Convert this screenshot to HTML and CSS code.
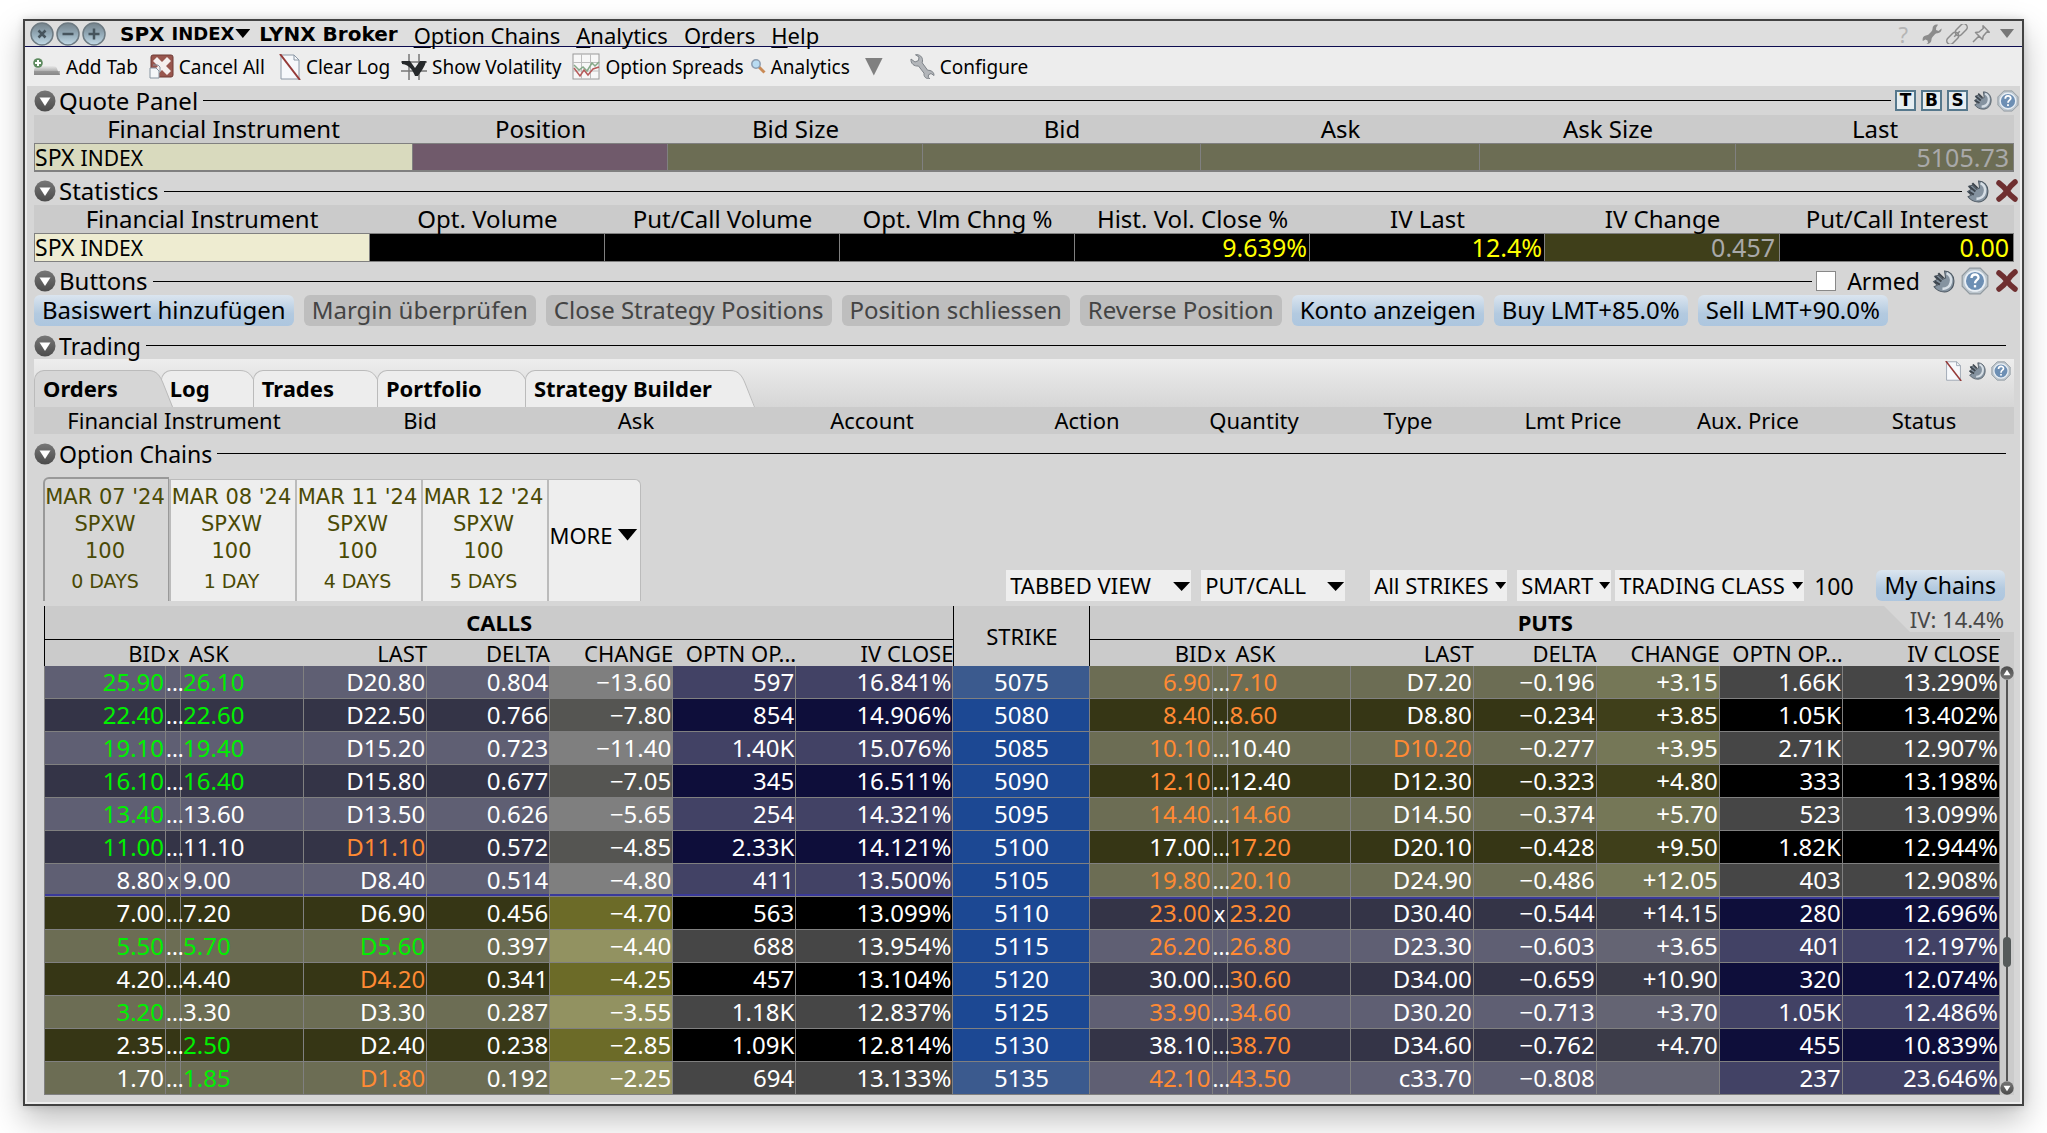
FILE: index.html
```html
<!DOCTYPE html>
<html lang="en">
<head>
<meta charset="utf-8">
<title>SPX INDEX – LYNX Broker</title>
<link rel="stylesheet" href="styles.css">
</head>
<body>
<svg class="sprite" aria-hidden="true">
  <defs>
    <linearGradient id="g-orb" x1="0" y1="0" x2="0" y2="1"><stop offset="0" stop-color="#75838c"/><stop offset=".5" stop-color="#93a9b6"/><stop offset="1" stop-color="#c3dbe8"/></linearGradient>
    <linearGradient id="g-disc" x1="0" y1="0" x2="0" y2="1"><stop offset="0" stop-color="#777"/><stop offset="1" stop-color="#4c4c4c"/></linearGradient>
    <linearGradient id="g-bar" x1="0" y1="0" x2="0" y2="1"><stop offset="0" stop-color="#e8e8e8"/><stop offset="1" stop-color="#858585"/></linearGradient>
    <symbol id="i-fold" viewBox="0 0 22 22"><circle cx="11" cy="11" r="10.5" fill="url(#g-disc)"/><path d="M5.500 7.500h11L11 16z" fill="#fff"/></symbol>
    <symbol id="i-close" viewBox="0 0 24 24"><circle cx="12" cy="12" r="11" fill="url(#g-orb)" stroke="#6d7a82" stroke-width="1.500"/><path d="M8.500 8.500l7 7M15.500 8.500l-7 7" stroke="#46545d" stroke-width="2.500"/></symbol>
    <symbol id="i-min" viewBox="0 0 24 24"><circle cx="12" cy="12" r="11" fill="url(#g-orb)" stroke="#6d7a82" stroke-width="1.500"/><path d="M6.500 12h11" stroke="#46545d" stroke-width="2.500"/></symbol>
    <symbol id="i-max" viewBox="0 0 24 24"><circle cx="12" cy="12" r="11" fill="url(#g-orb)" stroke="#6d7a82" stroke-width="1.500"/><path d="M6.500 12h11M12 6.500v11" stroke="#46545d" stroke-width="2.500"/></symbol>
    <symbol id="i-wrench-flat" viewBox="0 0 20 20"><path d="M19.500 4.500l-3 2.500-2.500-1 .2-2.500L16 .8C13 0 10.500 2 10.500 5c0 1-.5 2-1.500 3L7 10c-1 1-2 1.300-3.200 1.500C1.500 12 0 14 .8 17l2.700-1.500 2 1L6 19l-1.500 1c3 .3 5-1.800 5-4.500 0-1 .3-1.800 1-2.500l2.500-2.700c.8-.8 1.600-1 2.600-1.100 2.500-.2 4.300-2 3.900-4.700z" fill="#8c8c8c"/></symbol>
    <symbol id="i-link" viewBox="0 0 22 20"><g fill="none" stroke="#8c8c8c" stroke-width="1.500" transform="rotate(-45 11 10)"><rect x="-2" y="6.500" width="14" height="7" rx="3.500"/><rect x="10" y="6.500" width="14" height="7" rx="3.500"/><path d="M7 10h8"/></g></symbol>
    <symbol id="i-pin" viewBox="0 0 18 18"><path d="M1 17l6-6M3.500 7.500l7 7 .8-3.500 3.500-4 2.500.2L11 .8l.2 2.700L7 7z" fill="none" stroke="#8c8c8c" stroke-width="1.500" stroke-linejoin="round"/></symbol>
    <symbol id="i-addtab" viewBox="0 0 28 18"><path d="M1 17v-4c0-4 3-5 6-5h13c4 0 4 3 5 5l2 4z" fill="url(#g-bar)"/><path d="M1 13h26v4H1z" fill="#8b8b8b" opacity=".6"/><circle cx="5" cy="5" r="4.800" fill="#5d8a5f"/><path d="M5 2v6M2 5h6" stroke="#fff" stroke-width="2"/></symbol>
    <symbol id="i-cancel" viewBox="0 0 25 25"><rect x="2" y="1" width="22" height="22" rx="2" fill="#98564e" stroke="#6e3a35"/><path d="M8 3l5 5 5-5 4 4-5 5 5 5-4 4-5-5-5 5-4-4 5-5-5-5z" fill="#f5efee"/><path d="M1 14h6l3 3v7H1z" fill="#f4f6f8" stroke="#8794a0"/><path d="M4 11h5l2 2v5" fill="none" stroke="#8794a0"/></symbol>
    <symbol id="i-clear" viewBox="0 0 22 26"><path d="M2 1h13l5 5v19H2z" fill="#f6f8fb" stroke="#8c98a6"/><path d="M15 1v5h5" fill="none" stroke="#8c98a6"/><path d="M1 0l20 26" stroke="#953a38" stroke-width="2"/></symbol>
    <symbol id="i-vol" viewBox="0 0 26 26"><path d="M8 0v26M18 0v26M0 8h26M0 17h26" stroke="#777" stroke-width="1.500"/><path d="M1 7h8l5 7 5-7h6c-1 6-5 10-8 15h-3C12 17 9 11 1 10z" fill="#26292b"/></symbol>
    <symbol id="i-spread" viewBox="0 0 28 27"><rect x="1" y="1" width="26" height="25" fill="#f7f7f7" stroke="#9a9a9a"/><path d="M9.500 1v25M18.500 1v25M1 9.500h26M1 18h26" stroke="#bdbdbd"/><path d="M2 12l5 5 4-3 4 4 5-8 3 3 4-4" fill="none" stroke="#86a989" stroke-width="1.500"/><path d="M2 15l6 8 4-6 4 5 5-6 6-2" fill="none" stroke="#b65a5a" stroke-width="1.500"/></symbol>
    <symbol id="i-loupe" viewBox="0 0 15 15"><path d="M8 8l5.500 5.500" stroke="#c98a55" stroke-width="3"/><circle cx="5" cy="5" r="4.200" fill="#b9dcf2" stroke="#8c9db0" stroke-width="1.500"/></symbol>
    <symbol id="i-wrench" viewBox="0 0 25 25"><path d="M1 5l4 3 3.500-1.500L9 3 5.500.8C9.500 0 13 3 12.500 7l-.3 1.800 5.500 7.500c3-.2 6.500 1.500 6.300 5.200L21 19.500l-2.500 1.300-.3 2.700 1.800 1.200c-4 .5-6.500-2-6-5.500L8.500 12C4 12.500.5 9.500 1 5z" fill="#b3b6ba" stroke="#7e8389"/></symbol>
    <symbol id="i-tool" viewBox="0 0 22 22"><path d="M12 1c5 0 9 4 9 9.500C21 17 17 21 12 21c-4 0-7.500-1.500-10-5l3-1.500L1.500 11 5 9 2.500 6 6 5l4 4 3-1.500z" fill="#8593a0" stroke="#4e5963"/><path d="M3 6l6 5M6 3l5 5M2.500 11l5 3" stroke="#3d454d" stroke-width="2"/><path d="M14 3c4 2 5 5 4 9s-4 6-8 6" fill="none" stroke="#d6dee5" stroke-width="2.500"/></symbol>
    <symbol id="i-help" viewBox="0 0 24 24"><path d="M7.500 1h9L23 7.500v9L16.500 23h-9L1 16.500v-9z" fill="#bcc6ce" stroke="#8f989f"/><circle cx="12" cy="12" r="8.500" fill="#6d8fb4" stroke="#e9eff5" stroke-width="1.500"/><path d="M9 9.500c0-4 6-4 6-.5 0 2.200-3 2-3 5" fill="none" stroke="#fff" stroke-width="2"/><rect x="11" y="15.500" width="2" height="2" fill="#fff"/></symbol>
    <symbol id="i-x" viewBox="0 0 24 24"><path d="M4 4c4 3 6 5 8 8s4 5 8 8M20 3c-4 3-6 6-8 9s-5 6-8 8" fill="none" stroke="#6f2f30" stroke-width="5.500" stroke-linecap="round"/></symbol>
    <symbol id="i-cap" viewBox="0 0 25 37"><path d="M0 0C9 0 12 6 15 13L25 37H0z"/><path d="M0 .5C9 .5 12 6 15 13L24.500 37" fill="none" stroke="#bbb"/></symbol>
  </defs>
</svg>

<main class="window">
  <header class="titlebar">
    <div class="orbs">
      <button aria-label="Close"><svg width="24" height="24"><use href="#i-close"/></svg></button>
      <button aria-label="Minimize"><svg width="24" height="24"><use href="#i-min"/></svg></button>
      <button aria-label="Maximize"><svg width="24" height="24"><use href="#i-max"/></svg></button>
    </div>
    <h1 class="caption">SPX <small>INDEX</small><i class="tri tri-title"></i><span>LYNX Broker</span></h1>
    <nav class="menu">
      <a href="#chains"><u>O</u>ption Chains</a>
      <a href="#analytics"><u>A</u>nalytics</a>
      <a href="#orders">O<u>r</u>ders</a>
      <a href="#help"><u>H</u>elp</a>
    </nav>
    <div class="title-tools">
      <button class="hint" aria-label="Help">?</button>
      <button aria-label="Settings"><svg width="20" height="20"><use href="#i-wrench-flat"/></svg></button>
      <button aria-label="Link"><svg width="22" height="20"><use href="#i-link"/></svg></button>
      <button aria-label="Pin"><svg width="18" height="18"><use href="#i-pin"/></svg></button>
      <button class="tool-more" aria-label="More"><i class="tri tri-tool"></i></button>
    </div>
  </header>

  <div class="toolbar">
    <button><svg width="28" height="18"><use href="#i-addtab"/></svg>Add Tab</button>
    <button class="wide-after"><svg width="25" height="25"><use href="#i-cancel"/></svg>Cancel All</button>
    <button><svg width="22" height="26"><use href="#i-clear"/></svg>Clear Log</button>
    <button><svg width="26" height="26"><use href="#i-vol"/></svg>Show Volatility</button>
    <button class="tight-after"><svg width="28" height="27"><use href="#i-spread"/></svg>Option Spreads</button>
    <button><svg width="15" height="15"><use href="#i-loupe"/></svg>Analytics</button>
    <button class="bar-more" aria-label="More"><i class="tri tri-bar"></i></button>
    <button><svg width="25" height="25"><use href="#i-wrench"/></svg>Configure</button>
  </div>

  <div class="body">
    <section>
      <div class="head head-first">
        <button aria-label="Collapse"><svg width="22" height="22"><use href="#i-fold"/></svg></button>
        <h2>Quote Panel</h2><hr>
        <div class="head-tools tools-small">
          <button class="letter">T</button><button class="letter">B</button><button class="letter">S</button>
          <button aria-label="Configure"><svg width="19" height="19"><use href="#i-tool"/></svg></button>
          <button aria-label="Help"><svg width="22" height="22"><use href="#i-help"/></svg></button>
        </div>
      </div>
      <table class="panel quote">
        <colgroup><col style="width:379px"><col style="width:255px"><col style="width:255px"><col style="width:278px"><col style="width:279px"><col style="width:256px"><col style="width:278px"></colgroup>
        <thead><tr><th>Financial Instrument</th><th>Position</th><th>Bid Size</th><th>Bid</th><th>Ask</th><th>Ask Size</th><th>Last</th></tr></thead>
        <tbody><tr><td class="name">SPX <small>INDEX</small></td><td class="plum"></td><td></td><td></td><td></td><td></td><td>5105.73</td></tr></tbody>
      </table>
    </section>

    <section>
      <div class="head">
        <button aria-label="Collapse"><svg width="22" height="22"><use href="#i-fold"/></svg></button>
        <h2>Statistics</h2><hr>
        <div class="head-tools">
          <button aria-label="Configure"><svg width="23" height="23"><use href="#i-tool"/></svg></button>
          <button aria-label="Remove"><svg width="24" height="24"><use href="#i-x"/></svg></button>
        </div>
      </div>
      <table class="panel stats">
        <colgroup><col style="width:336px"><col style="width:235px"><col style="width:235px"><col style="width:235px"><col style="width:235px"><col style="width:235px"><col style="width:235px"><col style="width:234px"></colgroup>
        <thead><tr><th>Financial Instrument</th><th>Opt. Volume</th><th>Put/Call Volume</th><th>Opt. Vlm Chng %</th><th>Hist. Vol. Close %</th><th>IV Last</th><th>IV Change</th><th>Put/Call Interest</th></tr></thead>
        <tbody><tr><td class="name">SPX <small>INDEX</small></td><td></td><td></td><td></td><td>9.639%</td><td>12.4%</td><td class="olive">0.457</td><td>0.00</td></tr></tbody>
      </table>
    </section>

    <section>
      <div class="head">
        <button aria-label="Collapse"><svg width="22" height="22"><use href="#i-fold"/></svg></button>
        <h2>Buttons</h2><hr>
        <div class="head-tools">
          <label class="armed"><input type="checkbox">Armed</label>
          <button aria-label="Configure"><svg width="23" height="23"><use href="#i-tool"/></svg></button>
          <button aria-label="Help"><svg width="28" height="28"><use href="#i-help"/></svg></button>
          <button aria-label="Remove"><svg width="24" height="24"><use href="#i-x"/></svg></button>
        </div>
      </div>
      <div class="actions">
        <button class="pill">Basiswert hinzufügen</button>
        <button class="pill" disabled>Margin überprüfen</button>
        <button class="pill" disabled>Close Strategy Positions</button>
        <button class="pill" disabled>Position schliessen</button>
        <button class="pill" disabled>Reverse Position</button>
        <button class="pill">Konto anzeigen</button>
        <button class="pill">Buy LMT+85.0%</button>
        <button class="pill">Sell LMT+90.0%</button>
      </div>
    </section>

    <section>
      <div class="head head-plain">
        <button aria-label="Collapse"><svg width="22" height="22"><use href="#i-fold"/></svg></button>
        <h2>Trading</h2><hr>
      </div>
      <div class="tabstrip">
        <ul class="tabs">
          <li class="on"><button>Orders</button><svg width="25" height="37"><use href="#i-cap"/></svg></li>
          <li><button>Log</button><svg width="25" height="37"><use href="#i-cap"/></svg></li>
          <li><button>Trades</button><svg width="25" height="37"><use href="#i-cap"/></svg></li>
          <li><button>Portfolio</button><svg width="25" height="37"><use href="#i-cap"/></svg></li>
          <li><button>Strategy Builder</button><svg width="25" height="37"><use href="#i-cap"/></svg></li>
        </ul>
        <div class="strip-tools">
          <button aria-label="Clear"><svg width="19" height="20"><use href="#i-clear"/></svg></button>
          <button aria-label="Configure"><svg width="18" height="18"><use href="#i-tool"/></svg></button>
          <button aria-label="Help"><svg width="20" height="20"><use href="#i-help"/></svg></button>
        </div>
      </div>
      <table class="panel orders">
        <colgroup><col style="width:280px"><col style="width:212px"><col style="width:220px"><col style="width:252px"><col style="width:178px"><col style="width:156px"><col style="width:152px"><col style="width:178px"><col style="width:172px"><col style="width:180px"></colgroup>
        <thead><tr><th>Financial Instrument</th><th>Bid</th><th>Ask</th><th>Account</th><th>Action</th><th>Quantity</th><th>Type</th><th>Lmt Price</th><th>Aux. Price</th><th>Status</th></tr></thead>
      </table>
    </section>

    <section>
      <div class="head head-plain">
        <button aria-label="Collapse"><svg width="22" height="22"><use href="#i-fold"/></svg></button>
        <h2>Option Chains</h2><hr>
      </div>
      <div class="expiry-row">
        <div class="expiries">
          <button class="expiry on"><span>MAR 07 '24</span><span>SPXW</span><span>100</span><small>0 DAYS</small></button>
          <button class="expiry"><span>MAR 08 '24</span><span>SPXW</span><span>100</span><small>1 DAY</small></button>
          <button class="expiry"><span>MAR 11 '24</span><span>SPXW</span><span>100</span><small>4 DAYS</small></button>
          <button class="expiry"><span>MAR 12 '24</span><span>SPXW</span><span>100</span><small>5 DAYS</small></button>
          <button class="expiry more">MORE<i class="tri tri-more"></i></button>
        </div>
        <div class="filters">
          <label class="drop w-view"><select aria-label="View"><option>TABBED VIEW</option></select></label>
          <label class="drop w-side"><select aria-label="Side"><option>PUT/CALL</option></select></label>
          <label class="drop tight w-strikes"><select aria-label="Strikes"><option>All STRIKES</option></select></label>
          <label class="drop tight w-route"><select aria-label="Exchange"><option>SMART</option></select></label>
          <label class="drop tight w-class"><select aria-label="Class"><option>TRADING CLASS</option></select></label>
          <span class="multiplier">100</span>
          <button class="pill">My Chains</button>
        </div>
      </div>

      <div class="chain-frame">
        <table class="chain">
          <colgroup>
            <col style="width:122px"><col style="width:15px"><col style="width:123px"><col style="width:123px"><col style="width:123px"><col style="width:123px"><col style="width:123px"><col style="width:157px">
            <col style="width:137px">
            <col style="width:122px"><col style="width:15px"><col style="width:123px"><col style="width:123px"><col style="width:123px"><col style="width:123px"><col style="width:123px"><col style="width:157px">
          </colgroup>
          <thead>
            <tr class="group"><th colspan="8">CALLS</th><th rowspan="2" class="strike">STRIKE</th><th colspan="8">PUTS</th></tr>
            <tr class="fields"><th>BID</th><th class="sep">x</th><th class="ask">ASK</th><th>LAST</th><th>DELTA</th><th>CHANGE</th><th>OPTN OP...</th><th>IV CLOSE</th><th>BID</th><th class="sep">x</th><th class="ask">ASK</th><th>LAST</th><th>DELTA</th><th>CHANGE</th><th>OPTN OP...</th><th>IV CLOSE</th></tr>
          </thead>
          <tbody id="rows"></tbody>
        </table>
        <div class="scroller">
          <button aria-label="Scroll up"><svg width="14" height="14"><use href="#i-fold" transform="rotate(180 7 7)"/></svg></button>
          <span class="track"><span class="thumb"></span></span>
          <button aria-label="Scroll down"><svg width="14" height="14"><use href="#i-fold"/></svg></button>
        </div>
        <div class="iv-flag"><svg width="26" height="26"><path d="M0 0H26V26z" fill="#d6d6d6"/></svg><span>IV: 14.4%</span></div>
      </div>
    </section>
  </div>
</main>
<script src="app.js"></script>
</body>
</html>
```

FILE: styles.css
```css
* { box-sizing: border-box; }
body {
  margin: 0;
  padding: 19px 23px 27px;
  background: #fff;
  color: #000;
  font: 22px/28px "Noto Sans", "Open Sans", sans-serif;
}
button, select, input {
  margin: 0;
  padding: 0;
  border: 0;
  background: none;
  color: inherit;
  font: inherit;
}
button { display: flex; align-items: center; white-space: nowrap; }
svg { display: block; flex: none; overflow: visible; }
h1, h2, ul { margin: 0; padding: 0; font-weight: 400; }
.sprite { position: absolute; width: 0; height: 0; }

.tri { flex: none; background: #000; clip-path: polygon(0 0, 100% 0, 50% 100%); }
.tri-title { width: 15px; height: 9px; margin: 0 9px 0 1px; }
.tri-tool { width: 14px; height: 9px; background: #777; }
.tri-bar { width: 18px; height: 18px; background: #808080; }
.tri-more { width: 20px; height: 12px; margin-left: 5px; }

.window {
  border: 2px solid #424242;
  background: #ededed;
  box-shadow: 0 14px 30px rgba(0, 0, 0, .26), 0 0 8px rgba(0, 0, 0, .14);
}

/* title bar */
.titlebar {
  display: flex;
  align-items: center;
  height: 26px;
  padding: 0 8px 0 5px;
  background: #dedede;
  border-bottom: 1px solid #0d0d50;
}
.orbs { display: flex; gap: 2px; }
.caption {
  display: flex;
  align-items: center;
  margin-left: 14px;
  font: bold 20px/24px "DejaVu Sans", sans-serif;
  white-space: pre;
}
.caption small { font-size: 18px; }
.menu { display: flex; gap: 16px; margin: 2px 0 0 16px; }
.menu a { color: inherit; text-decoration: none; line-height: 24px; }
.menu u { text-underline-offset: 3px; text-decoration-thickness: 1px; }
.title-tools { display: flex; align-items: center; gap: 4px; margin-left: auto; }
.hint { margin-right: 10px; color: #b5b5b5; line-height: 24px; }
.tool-more { margin-left: 6px; }

/* toolbar */
.toolbar { display: flex; align-items: center; gap: 11px; height: 39px; padding: 0 8px; font-size: 19px; }
.toolbar button { gap: 5px; }
.toolbar .wide-after { margin-right: 3px; }
.toolbar .tight-after { margin-right: -4px; }
.bar-more { margin: 0 16px 0 4px; }

.body { margin: 0 2px 2px; padding: 0 0 7px 7px; background: #d6d6d6; }

/* section headings */
.head { display: flex; align-items: center; height: 33px; padding: 5px 1px 0 0; font-size: 24px; }
.head-first { height: 29px; padding-top: 0; }
.head-plain { padding-right: 10px; font-size: 23px; }
.head h2 { margin: 0 5px 0 3px; font-size: inherit; }
.head hr { flex: 1; height: 1px; margin: 0 4px 0 0; border: 0; background: #000; }
.actions + .head, .head-plain { padding-top: 6px; }
.head-tools { display: flex; align-items: center; gap: 6px; }
.tools-small { gap: 5px; }
.letter {
  justify-content: center;
  width: 21px;
  height: 21px;
  border: 2px solid #56788c;
  background: #e6eef2;
  font: bold 17px/17px "DejaVu Sans", sans-serif;
}
.armed { display: flex; align-items: center; gap: 11px; margin-right: 6px; font-size: 23px; }
.armed input { appearance: none; width: 20px; height: 20px; border: 1px solid #888; background: #fff; }

/* panels with one row */
table { border-collapse: separate; border-spacing: 0; table-layout: fixed; width: 100%; }
th { padding: 0; font-weight: 400; white-space: nowrap; }
.panel { width: calc(100% - 6px); }
.panel th { height: 28px; background: #cbcbcb; font-size: 24px; line-height: 28px; }
.panel td {
  height: 29px;
  padding: 0 4px;
  border: solid #808080;
  border-width: 1px 1px 1px 0;
  text-align: right;
  font-size: 25px;
  line-height: 26px;
  vertical-align: top;
}
.panel .name { padding: 0; border-left-width: 1px; color: #000; font-size: 23px; text-align: left; }
.panel .name small { font-size: 21px; line-height: 20px; }
.quote td { border-bottom-width: 2px; background: #6c6d54; color: #a9a9a9; }
.quote .name { background: #d9dabe; }
.quote .plum { background: #705a6b; }
.stats td { padding-right: 2px; background: #000; color: #ff0; }
.stats td:last-child { padding-right: 4px; }
.stats .name { background: #eeecd1; }
.stats .olive { padding-right: 4px; background: #3f3f1a; color: #a9a9a9; }
.orders th { height: 27px; font-size: 22px; line-height: 27px; }

/* buttons */
.actions { display: flex; gap: 10px; }
.pill {
  height: 31px;
  padding: 0 8px 2px;
  border-radius: 6px;
  background: linear-gradient(#dbe5ef, #b3cae0 60%, #adc6df);
  font-size: 24px;
}
.pill:disabled { background: #bebebe; color: #444; }

/* trading tabs */
.tabstrip {
  display: flex;
  justify-content: space-between;
  align-items: flex-end;
  height: 48px;
  margin-right: 6px;
  background: linear-gradient(#ededed, #d6d6d6);
}
.tabs { display: flex; list-style: none; font-weight: 700; }
.tabs li { position: relative; display: flex; margin-right: -12px; fill: #ededed; }
.tabs button {
  height: 37px;
  padding: 0 30px 3px 8px;
  border: solid #bbb;
  border-width: 1px 0 0 1px;
  border-radius: 10px 0 0 0;
  background: #ededed;
}
.tabs li:last-child button { padding-right: 18px; }
.tabs .on { z-index: 1; fill: #d6d6d6; }
.tabs .on button { background: #d6d6d6; }
.strip-tools { display: flex; align-items: center; align-self: flex-start; gap: 5px; padding: 2px 3px; }

/* expiries and filters */
.expiry-row { display: flex; justify-content: space-between; align-items: flex-end; padding: 10px 15px 5px 9px; }
.expiries { display: flex; align-items: flex-end; }
.expiry {
  flex-direction: column;
  width: 126px;
  height: 122px;
  padding: 4px 3px 0 0;
  border: solid #bbb;
  border-width: 1px 0 0 2px;
  background: #eee;
  color: #4a4a05;
  font: 21px/27px "DejaVu Sans", sans-serif;
}
.expiry small { margin-top: 3px; font-size: 19px; }
.expiry.on { height: 124px; padding-top: 5px; border: solid #999; border-width: 2px 1px 0 2px; border-radius: 6px 0 0 0; background: #d6d6d6; }
.expiry.more {
  flex-direction: row;
  justify-content: center;
  width: 94px;
  padding: 0 2px 12px 0;
  border-right-width: 1px;
  border-radius: 0 6px 0 0;
  color: #000;
  font: 22px/28px "Noto Sans", sans-serif;
}
.filters { display: flex; align-items: center; }
.filters .pill { padding: 0 9px 2px; font-size: 23px; }
.drop { position: relative; height: 31px; margin-right: 10px; background: #eee; }
.drop select { appearance: none; width: 100%; height: 31px; padding-left: 4px; line-height: 31px; }
.drop::after {
  content: "";
  position: absolute;
  top: 12px;
  right: 1px;
  width: 17px;
  height: 9px;
  background: #000;
  clip-path: polygon(0 0, 100% 0, 50% 100%);
  pointer-events: none;
}
.drop.tight::after { width: 11px; height: 7px; }
.w-view { width: 185px; }
.w-side { width: 144px; margin-right: 25px; }
.w-strikes { width: 137px; }
.w-route { width: 94px; margin-right: 4px; }
.w-class { width: 189px; }
.multiplier { margin-right: 22px; font-size: 23px; }

/* option chain */
.chain-frame { position: relative; display: flex; margin: 0 6px 0 10px; background: #cbcbcb; }
.chain { flex: 1; min-width: 0; }
.chain th { text-align: right; line-height: 26px; }
.chain .group th { height: 34px; border-bottom: 1px solid #000; font-weight: 700; text-align: center; line-height: 33px; }
.chain .group th:first-child, .chain .fields th:first-child { border-left: 1px solid #000; }
.chain .group .strike { border: solid #000; border-width: 0 1px; font-weight: 400; }
.chain .fields th { height: 26px; }
.chain .fields .ask { padding-left: 8px; text-align: left; }
.chain .fields .sep { padding: 0; text-align: center; }

.chain td {
  height: 33px;
  padding: 0 1px 0 0;
  border: solid #808080;
  border-width: 0 1px 1px 0;
  color: #fff;
  font-size: 24px;
  line-height: 32px;
  text-align: right;
  white-space: nowrap;
}
.chain td:first-child { border-left-width: 1px; }
.chain td.sep { padding: 0; font-size: 22px; text-align: center; }
.chain td.ask { padding-left: 2px; text-align: left; }
.chain td.strike { padding: 0; background: #1c4893; text-align: center; }
tr:first-child td.strike, tr:last-child td.strike { background: #3b5a8e; }
.chain td.up { color: #00f000; }
.chain td.down { color: #ff8a33; }

.itm { background: #343447; }
.otm { background: #363615; }
.call.itm.chg { background: #555552; }
.call.otm.chg { background: #6c6b28; }
.put.itm.chg { background: #3b3b48; }
.put.otm.chg { background: #3f3f1a; }
.itm.vol { background: #0e0e3a; }
.otm.vol { background: #000; }
tr:nth-child(odd) .itm { background: #5f5f73; }
tr:nth-child(odd) .otm { background: #6c6d54; }
tr:nth-child(odd) .call.itm.chg { background: #7f7f7f; }
tr:nth-child(odd) .call.otm.chg { background: #929261; }
tr:nth-child(odd) .put.itm.chg { background: #646473; }
tr:nth-child(odd) .put.otm.chg { background: #757757; }
tr:nth-child(odd) .itm.vol { background: #424265; }
tr:nth-child(odd) .otm.vol { background: #464646; }
.money-below .call { box-shadow: inset 0 -2px #3a3a9a; }
.money-above .put { box-shadow: inset 0 2px #3a3a9a; }

.scroller { display: flex; flex-direction: column; align-items: center; width: 14px; padding-top: 60px; }
.track { position: relative; flex: 1; width: 2px; background: #555; }
.thumb { position: absolute; top: 64%; left: -3px; width: 8px; height: 30px; border-radius: 4px; background: #555a5a; }

.iv-flag { position: absolute; top: 0; right: 0; display: flex; height: 26px; color: #484848; line-height: 26px; }
.iv-flag span { padding: 0 10px 0 0; background: #d6d6d6; }
```

FILE: app.js
```js
// Each side: bid, separator, ask, last, delta, change, open interest, IV close.
// A leading ^ marks an uptick, a leading ! a downtick.
const chain = [
  ["^25.90|...|^26.10|D20.80|0.804|−13.60|597|16.841%", "5075", "!6.90|...|!7.10|D7.20|−0.196|+3.15|1.66K|13.290%"],
  ["^22.40|...|^22.60|D22.50|0.766|−7.80|854|14.906%", "5080", "!8.40|...|!8.60|D8.80|−0.234|+3.85|1.05K|13.402%"],
  ["^19.10|...|^19.40|D15.20|0.723|−11.40|1.40K|15.076%", "5085", "!10.10|...|10.40|!D10.20|−0.277|+3.95|2.71K|12.907%"],
  ["^16.10|...|^16.40|D15.80|0.677|−7.05|345|16.511%", "5090", "!12.10|...|12.40|D12.30|−0.323|+4.80|333|13.198%"],
  ["^13.40|...|13.60|D13.50|0.626|−5.65|254|14.321%", "5095", "!14.40|...|!14.60|D14.50|−0.374|+5.70|523|13.099%"],
  ["^11.00|...|11.10|!D11.10|0.572|−4.85|2.33K|14.121%", "5100", "17.00|...|!17.20|D20.10|−0.428|+9.50|1.82K|12.944%"],
  ["8.80|x|9.00|D8.40|0.514|−4.80|411|13.500%", "5105", "!19.80|...|!20.10|D24.90|−0.486|+12.05|403|12.908%"],
  ["7.00|...|7.20|D6.90|0.456|−4.70|563|13.099%", "5110", "!23.00|x|!23.20|D30.40|−0.544|+14.15|280|12.696%"],
  ["^5.50|...|^5.70|^D5.60|0.397|−4.40|688|13.954%", "5115", "!26.20|...|!26.80|D23.30|−0.603|+3.65|401|12.197%"],
  ["4.20|...|4.40|!D4.20|0.341|−4.25|457|13.104%", "5120", "30.00|...|!30.60|D34.00|−0.659|+10.90|320|12.074%"],
  ["^3.20|...|3.30|D3.30|0.287|−3.55|1.18K|12.837%", "5125", "!33.90|...|!34.60|D30.20|−0.713|+3.70|1.05K|12.486%"],
  ["2.35|...|^2.50|D2.40|0.238|−2.85|1.09K|12.814%", "5130", "38.10|...|!38.70|D34.60|−0.762|+4.70|455|10.839%"],
  ["1.70|...|^1.85|!D1.80|0.192|−2.25|694|13.133%", "5135", "!42.10|...|!43.50|c33.70|−0.808||237|23.646%"]
];
const spot = 5105.73;
const kinds = ["bid", "sep", "ask", "last", "delta", "chg", "vol", "vol"];
const ticks = { "^": "up", "!": "down" };

function addSide(row, side, data, inMoney) {
  data.split("|").forEach((value, i) => {
    const tick = ticks[value[0]];
    const cell = row.insertCell();
    cell.className = [side, inMoney ? "itm" : "otm", kinds[i], tick || ""].join(" ").trim();
    cell.textContent = tick ? value.slice(1) : value;
  });
}

const body = document.getElementById("rows");
chain.forEach(([calls, strike, puts], i) => {
  const row = body.insertRow();
  const level = Number(strike);
  addSide(row, "call", calls, level < spot);
  const mid = row.insertCell();
  mid.className = "strike";
  mid.textContent = strike;
  addSide(row, "put", puts, level > spot);
  if (level < spot && level + 5 > spot) row.classList.add("money-below");
  if (level > spot && level - 5 < spot) row.classList.add("money-above");
});
```
